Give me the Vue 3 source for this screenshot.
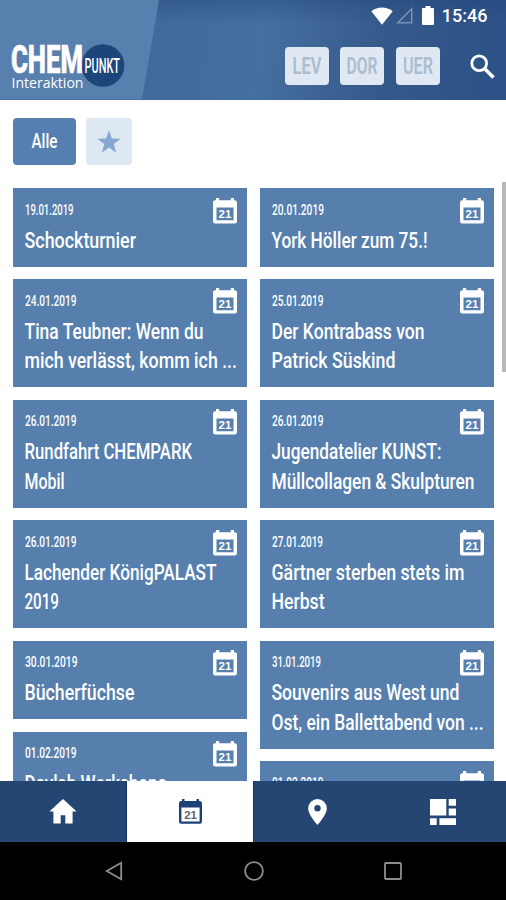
<script setup>
import { ref } from 'vue'

const regions = [
  { name: 'LEV', width: 29 },
  { name: 'DOR', width: 31 },
  { name: 'UER', width: 30 },
]

// width: drawn length of each condensed text line
const columns = [
  [
    { date: '19.01.2019', dateWidth: 48.5, lines: [{ text: 'Schockturnier', width: 111.5 }] },
    {
      date: '24.01.2019',
      dateWidth: 51.5,
      lines: [
        { text: 'Tina Teubner: Wenn du', width: 179 },
        { text: 'mich verlässt, komm ich ...', width: 212.5 },
      ],
    },
    {
      date: '26.01.2019',
      dateWidth: 51.5,
      lines: [
        { text: 'Rundfahrt CHEMPARK', width: 167.5 },
        { text: 'Mobil', width: 40 },
      ],
    },
    {
      date: '26.01.2019',
      dateWidth: 51.5,
      lines: [
        { text: 'Lachender KönigPALAST', width: 192 },
        { text: '2019', width: 34.5 },
      ],
    },
    { date: '30.01.2019', dateWidth: 52.5, lines: [{ text: 'Bücherfüchse', width: 110 }] },
    { date: '01.02.2019', dateWidth: 51.5, lines: [{ text: 'Daylab Workshops', width: 142 }] },
  ],
  [
    { date: '20.01.2019', dateWidth: 52, lines: [{ text: 'York Höller zum 75.!', width: 156 }] },
    {
      date: '25.01.2019',
      dateWidth: 51.5,
      lines: [
        { text: 'Der Kontrabass von', width: 153 },
        { text: 'Patrick Süskind', width: 124 },
      ],
    },
    {
      date: '26.01.2019',
      dateWidth: 51.5,
      lines: [
        { text: 'Jugendatelier KUNST:', width: 170 },
        { text: 'Müllcollagen & Skulpturen', width: 203 },
      ],
    },
    {
      date: '27.01.2019',
      dateWidth: 51,
      lines: [
        { text: 'Gärtner sterben stets im', width: 193 },
        { text: 'Herbst', width: 53 },
      ],
    },
    {
      date: '31.01.2019',
      dateWidth: 49,
      lines: [
        { text: 'Souvenirs aus West und', width: 188 },
        { text: 'Ost, ein Ballettabend von ...', width: 212 },
      ],
    },
    { date: '01.02.2019', dateWidth: 51.5, lines: [{ text: 'Daylab Workshops', width: 142 }] },
  ],
]

const tabs = ['home', 'calendar', 'places', 'more']
const activeTab = ref('calendar')
</script>

<template>
  <div class="app">
    <header class="header">
      <div class="brand">
        <svg class="logo" width="128" height="60" viewBox="0 0 128 60">
          <circle cx="103" cy="30.5" r="21.3" fill="#1c4679" />
          <text class="logo-main" x="11" y="38" textLength="72" lengthAdjust="spacingAndGlyphs">CHEM</text>
          <text class="logo-punkt" x="84.5" y="38.2" textLength="35.5" lengthAdjust="spacingAndGlyphs">PUNKT</text>
          <text class="logo-sub" x="11.5" y="52.5" textLength="72" lengthAdjust="spacingAndGlyphs">Interaktion</text>
        </svg>
      </div>
      <div class="header-right">
        <div class="status">
          <svg width="22" height="18" viewBox="0 0 22 18">
            <path d="M0.3 4.2C6.5-.7 15.5-.7 21.7 4.2L11 17.8z" fill="#fff" />
          </svg>
          <svg class="signal" width="17" height="17" viewBox="0 0 17 17">
            <path d="M15.7 1.8v13.9H1.8z" fill="none" stroke="#7891b4" stroke-width="1.5" />
          </svg>
          <svg class="battery" width="12" height="19" viewBox="0 0 12 19">
            <path d="M3.5 0h5v2H11q1 0 1 1v15q0 1-1 1H1q-1 0-1-1V3q0-1 1-1h2.5z" fill="#fff" />
          </svg>
          <span class="clock">15:46</span>
        </div>
        <div class="actions">
          <button v-for="region in regions" :key="region.name" class="region">
            <svg width="44" height="38">
              <text
                :x="22 - region.width / 2"
                y="27"
                :textLength="region.width"
                lengthAdjust="spacingAndGlyphs"
              >{{ region.name }}</text>
            </svg>
          </button>
          <svg class="search" width="25" height="25" viewBox="0 0 25 25" fill="none" stroke="#fff">
            <circle cx="9.2" cy="9.2" r="7.4" stroke-width="2.8" />
            <path d="M14.7 14.7l8.8 8.8" stroke-width="3.6" />
          </svg>
        </div>
      </div>
    </header>

    <main class="content">
      <div class="filters">
        <button class="filter filter-all">
          <svg width="63" height="47">
            <text x="18.5" y="30" textLength="26" lengthAdjust="spacingAndGlyphs">Alle</text>
          </svg>
        </button>
        <button class="filter filter-star">
          <svg width="24" height="24" viewBox="0 0 24 24">
            <path d="M12 .3l2.9 8.2 8.8.2-7 5.3 2.5 8.7L12 17.6l-7.2 5.1L7.3 14 .3 8.7l8.8-.2z" fill="#86a7cf" />
          </svg>
        </button>
      </div>

      <div class="columns">
        <div v-for="(events, c) in columns" :key="c" class="column">
          <article v-for="(event, i) in events" :key="i" class="card">
            <div class="card-head">
              <svg class="date" width="80" height="20">
                <text x="0" y="15.3" :textLength="event.dateWidth" lengthAdjust="spacingAndGlyphs">{{ event.date }}</text>
              </svg>
              <svg class="card-icon" width="24" height="26" viewBox="0 0 24 26">
                <path
                  fill="#fff"
                  fill-rule="evenodd"
                  d="M3 0h3.2v2.3h11.6V0H21v2.3h.8Q24 2.3 24 4.5v18.8q0 2.2-2.2 2.2H2.2Q0 25.5 0 23.3V4.500q0-2.200 2.200-2.200H3zM3.500 9.500v12.700h17V9.500z"
                />
                <text x="5.600" y="20">21</text>
              </svg>
            </div>
            <svg v-for="line in event.lines" :key="line.text" class="title">
              <text x="-0.5" y="21.7" :textLength="line.width" lengthAdjust="spacingAndGlyphs">{{ line.text }}</text>
            </svg>
          </article>
        </div>
      </div>
      <div class="scrollbar"></div>
    </main>

    <nav class="tabs">
      <button
        v-for="tab in tabs"
        :key="tab"
        class="tab"
        :class="{ active: tab === activeTab }"
        @click="activeTab = tab"
      >
        <svg v-if="tab === 'home'" width="28" height="25" viewBox="0 0 28 25">
          <path d="M14 0l13.6 12.6h-4V24.5h-7.3v-8.2h-4.6v8.2H4.400V12.600h-4z" fill="currentColor" />
        </svg>
        <svg v-else-if="tab === 'calendar'" width="23" height="25" viewBox="0 0 23 25" class="tab-calendar">
          <path
            fill="currentColor"
            fill-rule="evenodd"
            d="M3 0h2.5v2h12V0H20v2h.8Q23 2 23 4.2v18.3q0 2.2-2.2 2.2H2.2Q0 24.7 0 22.5V4.2Q0 2 2.2 2H3zM2.400 8.600v13.800h18.200V8.600z"
          />
          <text x="5.200" y="20">21</text>
        </svg>
        <svg v-else-if="tab === 'places'" width="19" height="26" viewBox="0 0 19 26">
          <path
            fill="currentColor"
            fill-rule="evenodd"
            d="M9.5 0A9.3 9.3 0 0 0 .2 9.3C.2 16 9.5 26 9.5 26s9.3-10 9.3-16.7A9.3 9.3 0 0 0 9.5 0zm0 6a3.2 3.2 0 1 1 0 6.4 3.2 3.2 0 0 1 0-6.4z"
          />
        </svg>
        <svg v-else width="26" height="26" viewBox="0 0 26 26">
          <path
            fill="currentColor"
            d="M0 0h16.3v16.5H0zM18.7 0H26v6.7h-7.3zM18.7 9.4H26v7.1h-7.3zM0 19.2h6.7V26H0zM9.4 19.2H26V26H9.4z"
          />
        </svg>
      </button>
    </nav>

    <footer class="system">
      <svg width="18" height="20" viewBox="0 0 18 20">
        <path d="M16.2 1.7v16.6L1.8 10z" />
      </svg>
      <svg width="20" height="20" viewBox="0 0 20 20">
        <circle cx="10" cy="10" r="8.9" />
      </svg>
      <svg width="18" height="18" viewBox="0 0 18 18">
        <rect x="1" y="1" width="16" height="16" rx="1" />
      </svg>
    </footer>
  </div>
</template>

<style>
body {
  margin: 0;
}
</style>

<style scoped>
.app {
  display: flex;
  flex-direction: column;
  width: 506px;
  height: 900px;
  overflow: hidden;
  background: #fff;
  font-family: Roboto, "Liberation Sans", sans-serif;
}

svg {
  display: block;
  flex: none;
  overflow: visible;
}

button {
  margin: 0;
  padding: 0;
  border: 0;
  font: inherit;
}

.header {
  display: flex;
  flex: none;
  height: 99.5px;
  background:
    linear-gradient(to bottom, rgba(30, 65, 120, 0.38), transparent 24%),
    linear-gradient(100deg, #41699b 28%, #456f9f 52%, #35598a 75%, #2c5186 100%);
}

.brand {
  width: 159px;
  background: #5880ae;
  clip-path: polygon(0 0, 100% 0, 142px 100%, 0 100%);
}

.logo {
  margin-top: 35px;
}

.logo text {
  fill: #fff;
}

.logo-main {
  font-size: 39px;
  font-weight: 800;
  stroke: #fff;
  stroke-width: 0.7px;
}

.logo-punkt {
  font-size: 20px;
  font-weight: 500;
}

.logo-sub {
  font-family: "Open Sans", sans-serif;
  font-size: 15px;
  font-weight: 500;
}

.header-right {
  flex: 1;
  display: flex;
  flex-direction: column;
}

.status {
  display: flex;
  align-items: center;
  justify-content: flex-end;
  height: 19px;
  padding: 6px 18.5px 0 0;
}

.signal {
  margin-left: 3px;
}

.battery {
  margin-left: 9px;
}

.clock {
  margin-left: 8px;
  color: #fff;
  font-size: 18px;
  font-weight: 500;
  line-height: 19px;
}

.actions {
  display: flex;
  align-items: center;
  justify-content: flex-end;
  margin-top: 22px;
  padding-right: 11.5px;
}

.region {
  width: 44px;
  height: 38px;
  margin-right: 11.3px;
  border-radius: 4px;
  background: #dfe8f3;
}

.region text {
  fill: #abbdce;
  font-size: 23px;
  font-weight: 600;
}

.search {
  margin-left: 18.5px;
}

.content {
  position: relative;
  flex: none;
  height: 681.5px;
  overflow: hidden;
}

.filters {
  display: flex;
  gap: 9.5px;
  padding: 18.5px 13px 0;
}

.filter {
  display: flex;
  align-items: center;
  justify-content: center;
  height: 47px;
  border-radius: 4px;
}

.filter-all {
  width: 63px;
  background: #557fb0;
}

.filter-all text {
  fill: #fff;
  font-size: 20px;
  font-weight: 500;
}

.filter-star {
  width: 46.5px;
  background: #dee8f3;
}

.columns {
  display: flex;
  gap: 12.5px;
  margin-top: 23px;
  padding: 0 12px 0 12.8px;
}

.column {
  flex: 1;
  display: flex;
  flex-direction: column;
  gap: 12.4px;
}

.card {
  padding: 9.5px 10.5px 11.3px 12.5px;
  background: #567fae;
}

.card-head {
  display: flex;
  align-items: flex-start;
  justify-content: space-between;
  height: 28.2px;
}

.date {
  margin-top: 2.3px;
}

.date text {
  fill: #fff;
  font-size: 14.5px;
  font-weight: 500;
}

.card-icon text {
  fill: #fff;
  font-family: "Liberation Sans", sans-serif;
  font-size: 11.5px;
  font-weight: bold;
}

.title {
  width: 210px;
  height: 29.6px;
}

.title text {
  fill: #fff;
  font-size: 22.5px;
  font-weight: 500;
}

.scrollbar {
  position: absolute;
  top: 82.5px;
  right: 0;
  width: 4px;
  height: 190px;
  background: #b9b9b9;
}

.tabs {
  display: flex;
  flex: none;
  height: 61px;
  background: #254672;
}

.tab {
  flex: 1;
  display: flex;
  align-items: center;
  justify-content: center;
  background: #254672;
  color: #fff;
}

.tab.active {
  border-right: 1.5px solid #132f63;
  border-left: 1.5px solid #132f63;
  background: #fff;
  color: #1c4275;
}

.tab-calendar text {
  fill: #5d6674;
  font-family: "Liberation Sans", sans-serif;
  font-size: 11.5px;
  font-weight: bold;
}

.system {
  flex: 1;
  display: flex;
  align-items: center;
  justify-content: space-between;
  padding: 0 104px 0 105px;
  background: #000;
}

.system svg {
  fill: none;
  stroke: #8d8d8d;
  stroke-width: 1.8;
}
</style>
